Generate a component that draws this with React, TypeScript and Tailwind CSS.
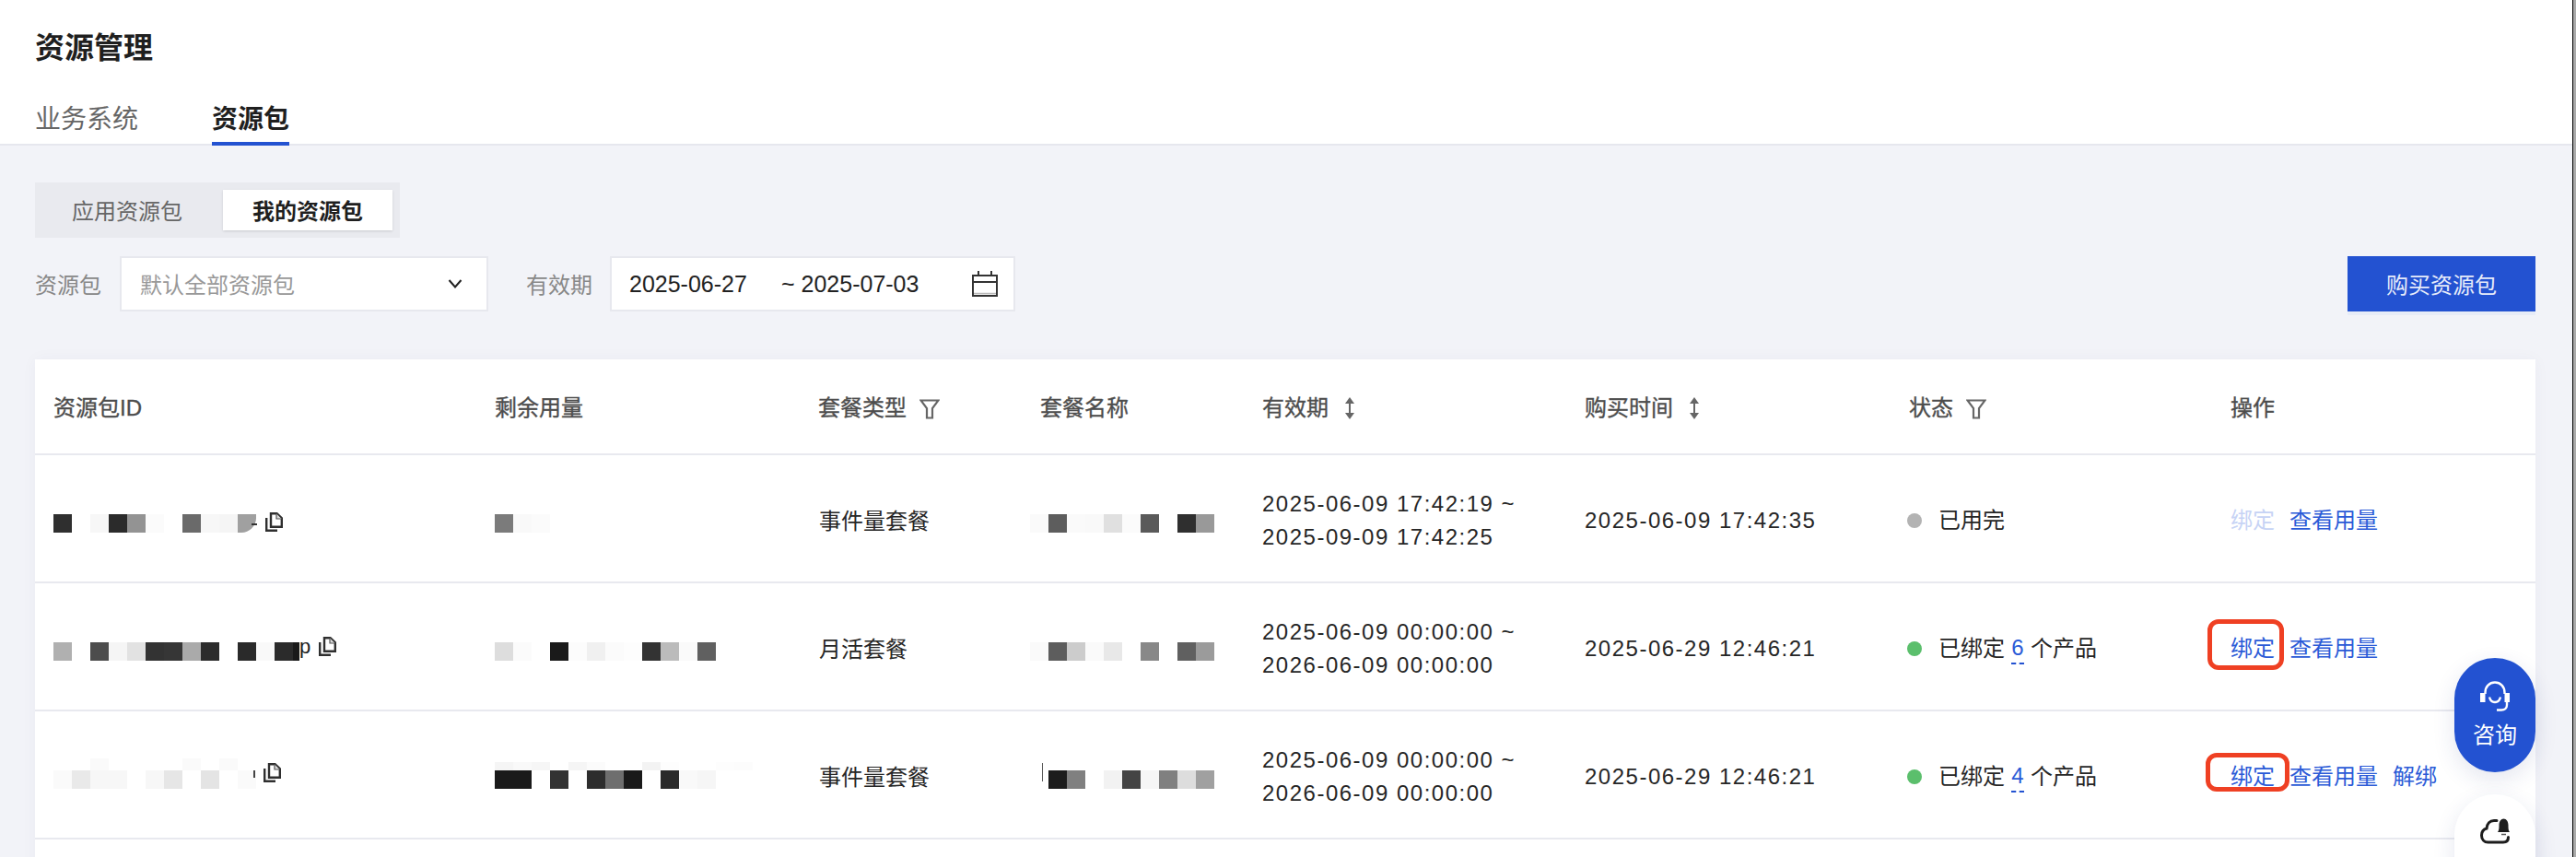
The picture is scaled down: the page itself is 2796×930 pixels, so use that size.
import React from 'react';

const COLS = 'grid grid-cols-[479px_351px_241px_241px_350px_352px_349px_351px]';

const MosaicCells: React.FC<{ cells: string[]; className?: string; lastClass?: string }> = ({ cells, className = 'h-5', lastClass = '' }) => (
    <div className="flex">
        {cells.map((c, i) => (
            <div key={i} className={`w-5 shrink-0 ${className} ${i === cells.length - 1 ? lastClass : ''}`} style={{ backgroundColor: c }} />
        ))}
    </div>
);

const CopyIcon = () => (
    <svg width="19" height="21" viewBox="0 0 19 21" fill="none" className="shrink-0">
        <path d="M6 1.2H12.5L17.8 6.2V15.8H6Z" fill="#fff" stroke="#2f2f2f" strokeWidth="2.4" />
        <path d="M12 1.5V7H17.5" fill="#ddd" stroke="#555" strokeWidth="1.2" />
        <path d="M1.2 6V19.8H13" stroke="#2f2f2f" strokeWidth="2.4" />
    </svg>
);

const FilterIcon = () => (
    <svg width="22" height="22" viewBox="0 0 22 22" fill="none" className="ml-[14px] mt-0.5">
        <path d="M1.5 1.5H20.5L14 10V20.5H8V10Z" stroke="#666" strokeWidth="2.2" strokeLinejoin="miter" />
    </svg>
);

const SortIcon = () => (
    <svg width="10" height="24" viewBox="0 0 10 24" className="ml-[18px]">
        <path d="M5 0L10 7H0Z" fill="#666" />
        <path d="M5 24L0 17H10Z" fill="#666" />
        <rect x="4" y="6" width="2" height="12" fill="#666" />
    </svg>
);

const CalendarIcon = () => (
    <svg width="28" height="28" viewBox="0 0 28 28" fill="none">
        <path d="M1 5H27V27H1Z" stroke="#333" strokeWidth="2" />
        <path d="M1 12H27" stroke="#333" strokeWidth="2" />
        <path d="M7 0V6M21 0V6" stroke="#333" strokeWidth="2" />
        <path d="M2 24.5H26" stroke="#bbb" strokeWidth="1.5" />
    </svg>
);

const HeadsetIcon = () => (
    <svg width="32" height="33" viewBox="0 0 32 33" fill="none">
        <path d="M5.5 14V12.5C5.5 6 10 1.5 16 1.5C22 1.5 26.5 6 26.5 12.5V14" stroke="#fff" strokeWidth="2.4" />
        <rect x="0" y="13" width="5.5" height="10" fill="#fff" />
        <rect x="26.5" y="13" width="5.5" height="10" fill="#fff" />
        <path d="M29 23V26C29 29.5 26.5 31.5 23 31.5H18" stroke="#fff" strokeWidth="2.4" />
        <path d="M10 17.5C11 21.5 13.5 23 16 23C18.5 23 21 21.5 22 17.5" stroke="#fff" strokeWidth="2.4" />
    </svg>
);

const CloudBellIcon = () => (
    <svg width="32" height="28" viewBox="0 0 32 28" fill="none">
        <path d="M18 2.5H15C10.5 2.5 7.5 6 7 11C3.5 12 1.5 15 1.5 18.5C1.5 23 4.5 26 8.5 26H25C28.5 26 30.5 24 30.5 20.5" stroke="#1d1d1d" strokeWidth="3" strokeLinecap="round" />
        <path d="M19 15C20.5 13 20.5 10.5 20.5 7.5C20.5 3.5 22.5 0.5 25.5 0.5C28.5 0.5 30.5 3.5 30.5 7.5C30.5 10.5 30.5 13 32 15Z" fill="#1d1d1d" />
        <path d="M23 17.5H28" stroke="#555" strokeWidth="1.5" />
    </svg>
);

const HeaderCell: React.FC<{ label: string; icon?: React.ReactNode }> = ({ label, icon }) => (
    <div className="pl-5 flex items-center text-[24px] text-[#4d4d4d]">
        <span className="[-webkit-text-stroke:0.35px_#4d4d4d]">{label}</span>
        {icon}
    </div>
);

const Bound: React.FC<{ count: number }> = ({ count }) => (
    <>
        <span>已绑定</span>
        <span className="mx-[7px] w-[14px] text-center text-[#2b5bd7] leading-[32px] border-b-2 border-dashed border-[#2352d1]">{count}</span>
        <span>个产品</span>
    </>
);

type Row = {
    id: string[];
    idLast?: string;
    idTop?: string[];
    idTail: React.ReactNode;
    idIconOffset: string;
    left: string[];
    leftTop?: string[];
    type: string;
    name: string[];
    nameMark?: boolean;
    start: string;
    end: string;
    bought: string;
    dot: string;
    status: React.ReactNode;
    bindBox?: string;
    bindDisabled?: boolean;
    unbind?: boolean;
};

const rows: Row[] = [
    {
        id: ['#2f2f2f', '#ffffff', '#f7f7f7', '#2b2b2b', '#939393', '#fbfbfb', '#ffffff', '#6a6a6a', '#f7f7f7', '#f5f5f5', '#a0a0a0'],
        idLast: 'rounded-br-[16px]',
        idTail: <div className="w-[6px] h-[2px] bg-[#333] -ml-[5px] mt-[2px]" />,
        idIconOffset: 'ml-[9px] -mt-[3px]',
        left: ['#7b7b7b', '#f9f9f9', '#fbfbfb'],
        type: '事件量套餐',
        name: ['#fafafa', '#5d5d5d', '#fafafa', '#f9f9f9', '#e0e0e0', '#fbfbfb', '#5a5a5a', '#ffffff', '#2f2f2f', '#999999'],
        start: '2025-06-09 17:42:19 ~',
        end: '2025-09-09 17:42:25',
        bought: '2025-06-09 17:42:35',
        dot: 'bg-[#b3b3b3]',
        status: <span>已用完</span>,
        bindDisabled: true,
    },
    {
        id: ['#b0b0b0', '#ffffff', '#4d4d4d', '#f5f5f5', '#e2e2e2', '#333333', '#363636', '#aaaaaa', '#2c2c2c', '#ffffff', '#2a2a2a', '#f9f9f9', '#2b2b2b'],
        idTail: (
            <>
                <div className="w-[7px] h-5 bg-[#1a1a1a]" />
                <span className="-mt-[10px] text-[22px] leading-[22px] text-[#222]">p</span>
            </>
        ),
        idIconOffset: 'ml-[9px] -mt-[10px]',
        left: ['#dddddd', '#fbfbfb', '#ffffff', '#1a1a1a', '#fcfcfc', '#f0f0f0', '#fbfbfb', '#fdfdfd', '#333333', '#bbbbbb', '#fafafa', '#606060'],
        type: '月活套餐',
        name: ['#fafafa', '#5d5d5d', '#cccccc', '#fafafa', '#e8e8e8', '#ffffff', '#888888', '#ffffff', '#606060', '#9b9b9b'],
        start: '2025-06-09 00:00:00 ~',
        end: '2026-06-09 00:00:00',
        bought: '2025-06-29 12:46:21',
        dot: 'bg-[#5bbf6c]',
        status: <Bound count={6} />,
        bindBox: '-left-[25px] -top-[14px] w-[83px] h-[55px]',
    },
    {
        id: ['#fafafa', '#e9e9e9', '#f7f7f7', '#f7f7f7', '#ffffff', '#f7f7f7', '#e6e6e6', '#ffffff', '#e4e4e4', '#ffffff', '#fafafa'],
        idTop: ['#ffffff', '#ffffff', '#fafafa', '#ffffff', '#ffffff', '#ffffff', '#ffffff', '#fafafa', '#ffffff', '#fafafa', '#ffffff'],
        idTail: <div className="w-[2px] h-[12px] bg-[#444] -ml-[3px] -mt-[16px]" />,
        idIconOffset: 'ml-[9px] -mt-[14px]',
        left: ['#1a1a1a', '#1a1a1a', '#ffffff', '#333333', '#ffffff', '#2d2d2d', '#6e6e6e', '#1a1a1a', '#ffffff', '#2b2b2b', '#f9f9f9', '#f6f6f6'],
        leftTop: ['#f5f5f5', '#f9f9f9', '#f6f6f6', '#ffffff', '#f5f5f5', '#fbfbfb', '#ffffff', '#ffffff', '#f3f3f3', '#fdfdfd', '#ffffff', '#ffffff', '#fdfdfd', '#fcfcfc'],
        type: '事件量套餐',
        name: ['#ffffff', '#1c1c1c', '#808080', '#ffffff', '#f2f2f2', '#444444', '#f6f6f6', '#808080', '#dddddd', '#a0a0a0'],
        nameMark: true,
        start: '2025-06-09 00:00:00 ~',
        end: '2026-06-09 00:00:00',
        bought: '2025-06-29 12:46:21',
        dot: 'bg-[#5bbf6c]',
        status: <Bound count={4} />,
        bindBox: '-left-[27px] -top-[8px] w-[91px] h-[42px]',
        unbind: true,
    },
];

const App: React.FC = () => {
    return (
        <div className="flex w-[2796px] h-[930px] overflow-hidden [font-family:'Liberation_Sans','Noto_Sans_CJK_SC',sans-serif]">
            <div className="relative w-[2792px] shrink-0 bg-[#f2f3f8]">
                <div className="h-[158px] bg-white border-b-2 border-[#e6e7ee] pl-[38px] pt-[30px]">
                    <h1 className="text-[32px] leading-[44px] font-bold text-[#1f1f1f]">资源管理</h1>
                    <div className="flex gap-20 h-[84px] pt-[36px]">
                        <div className="text-[28px] leading-[40px] text-[#666]">业务系统</div>
                        <div className="text-[28px] leading-[40px] font-bold text-[#1f1f1f] h-[48px] border-b-4 border-[#2352d1]">资源包</div>
                    </div>
                </div>

                <div className="pl-[38px] pt-[40px] w-[2752px]">
                    <div className="flex w-[396px] h-[60px] items-center bg-[#e9eaef]">
                        <div className="w-[204px] pl-10 pt-1 text-[24px] text-[#666]">应用资源包</div>
                        <div className="w-[184px] h-[44px] pt-1 flex items-center justify-center bg-white text-[24px] font-bold text-[#1f1f1f] shadow-sm">我的资源包</div>
                    </div>

                    <div className="flex items-start mt-5">
                        <div className="flex items-center h-[60px] w-[92px] pt-1 text-[24px] text-[#888]">资源包</div>
                        <div className="flex items-center justify-between w-[400px] h-[60px] bg-white border-2 border-[#e7e8ee] pl-5 pr-[26px]">
                            <span className="pt-1 text-[24px] text-[#999]">默认全部资源包</span>
                            <svg width="16" height="10" viewBox="0 0 16 10" fill="none">
                                <path d="M1.5 1L8 8.5L14.5 1" stroke="#222" strokeWidth="2" />
                            </svg>
                        </div>
                        <div className="flex items-center h-[60px] w-[91px] ml-[41px] pt-1 text-[24px] text-[#888]">有效期</div>
                        <div className="flex items-center w-[440px] h-[60px] bg-white border-2 border-[#e7e8ee] pl-[19px] pr-[17px] text-[25px] text-[#222]">
                            <span className="w-[165px] pt-0.5">2025-06-27</span>
                            <span className="flex-1 pt-0.5">~ 2025-07-03</span>
                            <CalendarIcon />
                        </div>
                        <button className="ml-auto w-[204px] h-[60px] pt-1 bg-[#2352d1] text-[24px] text-[#e6ebfa] shadow-[0_4px_0_#e7ecf7]">购买资源包</button>
                    </div>

                    <div className="mt-[52px] w-[2714px] bg-white shadow-[0_0_16px_rgba(30,40,90,0.04)]">
                        <div className={`${COLS} h-[104px] pt-1 border-b-2 border-[#e8e9ef]`}>
                            <HeaderCell label="资源包ID" />
                            <HeaderCell label="剩余用量" />
                            <HeaderCell label="套餐类型" icon={<FilterIcon />} />
                            <HeaderCell label="套餐名称" />
                            <HeaderCell label="有效期" icon={<SortIcon />} />
                            <HeaderCell label="购买时间" icon={<SortIcon />} />
                            <HeaderCell label="状态" icon={<FilterIcon />} />
                            <HeaderCell label="操作" />
                        </div>

                        {rows.map((row, i) => (
                            <div key={i} className={`${COLS} h-[139px] border-b-2 border-[#e8e9ef] text-[24px] text-[#262626]`}>
                                <div className="pl-5 flex items-center">
                                    <div className="relative flex items-center mt-[10px]">
                                        {row.idTop && (
                                            <div className="absolute left-0 -top-[13px]">
                                                <MosaicCells cells={row.idTop} className="h-[13px]" />
                                            </div>
                                        )}
                                        <MosaicCells cells={row.id} lastClass={row.idLast} />
                                        {row.idTail}
                                        <div className={row.idIconOffset}>
                                            <CopyIcon />
                                        </div>
                                    </div>
                                </div>
                                <div className="pl-5 flex items-center">
                                    <div className="relative mt-[10px]">
                                        {row.leftTop && (
                                            <div className="absolute left-0 -top-[9px]">
                                                <MosaicCells cells={row.leftTop} className="h-[9px]" />
                                            </div>
                                        )}
                                        <MosaicCells cells={row.left} />
                                    </div>
                                </div>
                                <div className="pl-[21px] pt-[6px] flex items-center">{row.type}</div>
                                <div className="flex items-center">
                                    <div className="relative ml-[9px] mt-[10px]">
                                        {row.nameMark && <div className="absolute left-[13px] -top-[8px] w-px h-5 bg-[#555]" />}
                                        <MosaicCells cells={row.name} />
                                    </div>
                                </div>
                                <div className="pl-5 pt-[5px] flex flex-col justify-center leading-[36px] tracking-[1.5px]">
                                    <span>{row.start}</span>
                                    <span>{row.end}</span>
                                </div>
                                <div className="pl-5 pt-[5px] flex items-center tracking-[1.5px]">{row.bought}</div>
                                <div className="pl-5 pt-[5px] flex items-center">
                                    <span className={`w-4 h-4 rounded-full -ml-[2px] mr-[18px] ${row.dot}`} />
                                    {row.status}
                                </div>
                                <div className="pl-5 pt-[5px] flex items-center gap-4 text-[#2b5bd7] leading-[36px]">
                                    <span className={`relative ${row.bindDisabled ? 'text-[#c6d3f5]' : ''}`}>
                                        绑定
                                        {row.bindBox && (
                                            <span className={`absolute border-[5px] border-[#ef4023] rounded-[12px] ${row.bindBox}`} />
                                        )}
                                    </span>
                                    <span>查看用量</span>
                                    {row.unbind && <span>解绑</span>}
                                </div>
                            </div>
                        ))}
                        <div className="h-[60px]" />
                    </div>
                </div>

                <div className="absolute left-[2664px] top-[714px] w-[88px] h-[124px] rounded-[44px] bg-[#2352d1] flex flex-col items-center pt-[25px] text-white shadow-[0_8px_24px_rgba(30,50,120,0.12)]">
                    <HeadsetIcon />
                    <span className="text-[24px] leading-[36px] mt-[8px]">咨询</span>
                </div>
                <div className="absolute left-[2664px] top-[862px] w-[88px] h-[124px] rounded-[44px] bg-white flex flex-col items-center pt-[26px] shadow-[0_8px_24px_rgba(30,50,120,0.12)]">
                    <CloudBellIcon />
                </div>
            </div>
            <div className="w-px bg-black" />
            <div className="flex-1 bg-[#aaaaaa]" />
        </div>
    );
};

export default App;
